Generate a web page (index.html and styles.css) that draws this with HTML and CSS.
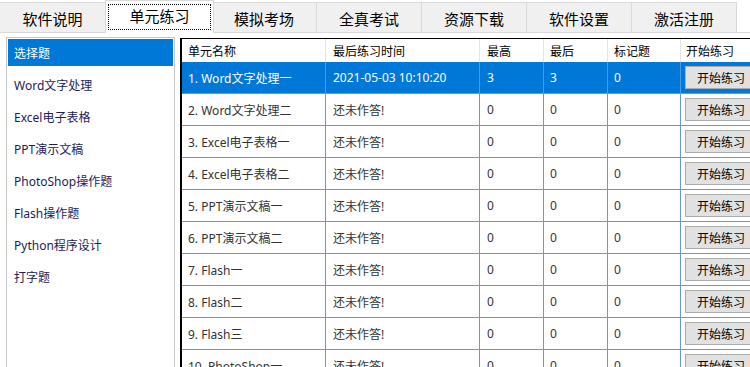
FILE: index.html
```html
<!DOCTYPE html>
<html lang="zh-CN">

<head>
  <meta charset="UTF-8" />
  <meta name="viewport" content="width=device-width, initial-scale=1.0" />
  <title>单元练习</title>

  <link rel="stylesheet" href="styles.css">
</head>

<body>
  <div id="app">
    <div class="tabs">
      <div class="tab">软件说明</div>
      <div class="tab active"><span class="focus">单元练习</span></div>
      <div class="tab">模拟考场</div>
      <div class="tab">全真考试</div>
      <div class="tab">资源下载</div>
      <div class="tab">软件设置</div>
      <div class="tab">激活注册</div>
      <div class="tab-rest"></div>
    </div>

    <div class="content">
      <ul class="type-list">
        <li class="selected">选择题</li>
        <li>Word文字处理</li>
        <li>Excel电子表格</li>
        <li>PPT演示文稿</li>
        <li>PhotoShop操作题</li>
        <li>Flash操作题</li>
        <li>Python程序设计</li>
        <li>打字题</li>
      </ul>

      <div class="grid">
        <div class="grid-row head">
          <div>单元名称</div>
          <div>最后练习时间</div>
          <div>最高</div>
          <div>最后</div>
          <div>标记题</div>
          <div>开始练习</div>
        </div>
        <div id="rows"></div>
      </div>
    </div>
  </div>

  <script>
    const units = [
      ["Word文字处理一", "2021-05-03 10:10:20", 3, 3, 0],
      ["Word文字处理二"],
      ["Excel电子表格一"],
      ["Excel电子表格二"],
      ["PPT演示文稿一"],
      ["PPT演示文稿二"],
      ["Flash一"],
      ["Flash二"],
      ["Flash三"],
      ["PhotoShop一"]
    ];

    let html = "";
    for (let i = 0; i < units.length; i++) {
      let u = units[i];
      let time = u[1] || "还未作答!";
      html += `<div class="grid-row${i == 0 ? " selected" : ""}">
        <div>${i + 1}. ${u[0]}</div>
        <div>${time}</div>
        <div>${u[2] || 0}</div>
        <div>${u[3] || 0}</div>
        <div>${u[4] || 0}</div>
        <div><button class="start">开始练习</button></div>
      </div>`;
    }
    document.querySelector("#rows").innerHTML = html;
  </script>
</body>

</html>
```

FILE: styles.css
```css
html,
body {
  margin: 0;
  width: 750px;
  height: 367px;
  overflow: hidden;
  background: #fff;
}

body {
  font-family: "Noto Sans", "Noto Sans CJK SC", sans-serif;
  font-size: 12px;
  color: #000;
}

/* 选项卡 */
.tabs {
  display: flex;
  align-items: flex-end;
  height: 33px;
}

.tab {
  box-sizing: border-box;
  flex: none;
  width: 106px;
  height: 31px;
  margin-right: -1px;
  background: #f0f0f0;
  border: 1px solid #d9d9d9;
  font-family: "Noto Sans CJK SC", sans-serif;
  font-size: 15px;
  display: flex;
  align-items: center;
  justify-content: center;
  padding-top: 2px;
}

.tab:first-child {
  border-left: 0;
}

.tab.active {
  position: relative;
  z-index: 1;
  width: 109px;
  height: 33px;
  margin-right: -3px;
  background: #fff;
  border-bottom: 0;
  padding: 3px 2px 3px 2px;
}

.tab .focus {
  box-sizing: border-box;
  width: 100%;
  height: 100%;
  border: 1px dotted #000;
  display: flex;
  align-items: center;
  justify-content: center;
  padding-bottom: 3px;
}

.tab-rest {
  flex: 1;
  height: 1px;
  background: #d9d9d9;
}

/* 内容区 */
.content {
  display: flex;
  align-items: flex-start;
  gap: 5px;
  padding: 4px 0 0 6px;
}

.type-list {
  box-sizing: border-box;
  flex: none;
  width: 169px;
  height: 340px;
  margin: 0;
  padding: 1px;
  list-style: none;
  border: 1px solid #c6c6c6;

  li {
    height: 27px;
    margin-bottom: 5px;
    padding-left: 6px;
    display: flex;
    align-items: center;
    color: #1e1b5a;
  }

  li.selected {
    background: #0078d7;
    color: #fff;
  }
}

.grid {
  flex: none;
  width: 600px;
  margin-top: 1px;
  border-top: 1px solid #000;
  border-left: 2px solid #000;
}

.grid-row {
  display: grid;
  grid-template-columns: 144px 154px 64px 64px 73px 100px;
  height: 32px;
  border-bottom: 1px solid #6495ed;
  box-sizing: border-box;
  color: #333;

  > div {
    box-sizing: border-box;
    display: flex;
    align-items: center;
    padding-left: 6px;
    border-right: 1px solid #6495ed;
    white-space: nowrap;
  }

  > div:nth-child(2),
  > div:nth-child(3) {
    padding-left: 7px;
  }

  > div:last-child {
    padding-left: 4px;
    border-right: 0;
  }
}

.grid-row.head {
  height: 23px;
  border-bottom: 0;
  color: #000;

  > div {
    border-right-color: #e3e3e3;
  }

  > div:last-child {
    padding-left: 5px;
  }
}

.grid-row.selected {
  background: #0078d7;
  color: #fff;

  > div {
    border-right-color: #4f98e6;
  }
}

.start {
  box-sizing: border-box;
  width: 72px;
  height: 23px;
  margin: 0;
  padding: 0 0 0 11px;
  background: #e1e1e1;
  border: 1px solid #adadad;
  border-radius: 0;
  font-family: "Noto Sans CJK SC", sans-serif;
  font-size: 12px;
  color: #000;
  text-align: left;
}
```
